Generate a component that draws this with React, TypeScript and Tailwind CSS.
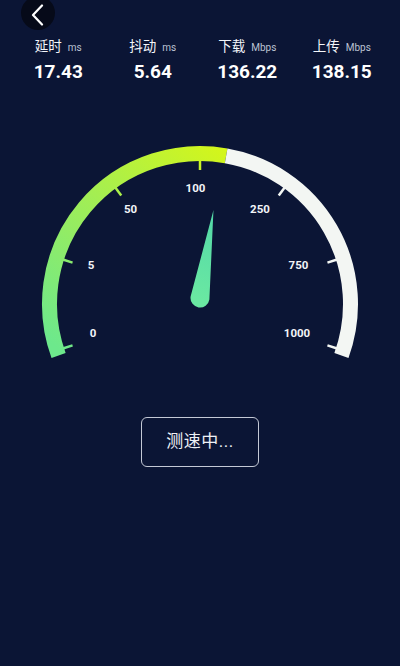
import React from 'react'

const CX = 200
const CY = 304

const polar = (deg: number, r: number) => {
  const a = (deg * Math.PI) / 180
  return [CX + r * Math.sin(a), CY - r * Math.cos(a)]
}

const arcPath = (a1: number, a2: number, r: number) => {
  const [x1, y1] = polar(a1, r)
  const [x2, y2] = polar(a2, r)
  const large = a2 - a1 > 180 ? 1 : 0
  return `M${x1} ${y1} A${r} ${r} 0 ${large} 1 ${x2} ${y2}`
}

const stats = [
  { label: '延时', unit: 'ms', value: '17.43' },
  { label: '抖动', unit: 'ms', value: '5.64' },
  { label: '下载', unit: 'Mbps', value: '136.22' },
  { label: '上传', unit: 'Mbps', value: '138.15' },
]

const labels = [
  { t: '0', x: 93, y: 333 },
  { t: '5', x: 91, y: 265 },
  { t: '50', x: 130.5, y: 209 },
  { t: '100', x: 195.5, y: 188 },
  { t: '250', x: 260, y: 209 },
  { t: '750', x: 298.5, y: 265 },
  { t: '1000', x: 297, y: 333 },
]

const ticks = [-108, -72, -36, 0, 36, 72, 108]

function Gauge() {
  return (
    <svg width="400" height="240" viewBox="0 130 400 240" className="block">
      <defs>
        <linearGradient id="fill" gradientUnits="userSpaceOnUse" x1="60" y1="350" x2="225" y2="150">
          <stop offset="0" stopColor="#6de88c" />
          <stop offset="0.55" stopColor="#a4ee52" />
          <stop offset="1" stopColor="#d4f61a" />
        </linearGradient>
        <linearGradient id="needle" gradientUnits="userSpaceOnUse" x1="200" y1="300" x2="214" y2="210">
          <stop offset="0" stopColor="#6ae8a2" />
          <stop offset="1" stopColor="#52d8a8" />
        </linearGradient>
      </defs>

      {/* arc */}
      <path d={arcPath(-110, 10, 150.5)} fill="none" stroke="url(#fill)" strokeWidth="15" />
      <path d={arcPath(10, 110, 150.5)} fill="none" stroke="#f3f6f3" strokeWidth="15" />

      {/* ticks */}
      {ticks.map((a) => {
        const [x1, y1] = polar(a, 134)
        const [x2, y2] = polar(a, 145)
        return (
          <line
            key={a}
            x1={x1}
            y1={y1}
            x2={x2}
            y2={y2}
            stroke={a <= 0 ? 'url(#fill)' : '#f3f6f3'}
            strokeWidth="2.5"
          />
        )
      })}

      {labels.map((l) => (
        <text
          key={l.t}
          x={l.x}
          y={l.y + 4}
          textAnchor="middle"
          fill="#f2f4f8"
          fontSize="11.5"
          fontWeight="700"
          fontFamily="Roboto, sans-serif"
        >
          {l.t}
        </text>
      ))}

      {/* needle */}
      <g transform="rotate(8.7 200 298)">
        <path d="M200 209 L209.5 298 A9.5 9.5 0 0 1 190.5 298 Z" fill="url(#needle)" />
      </g>
    </svg>
  )
}

export default function App() {
  return (
    <div
      className="w-[400px] h-[666px] bg-[#0b1535] overflow-hidden flex flex-col text-white"
      style={{ fontFamily: 'Roboto, "Noto Sans CJK SC", sans-serif' }}
    >
      <div className="h-[130px] flex flex-col">
        <div className="h-[30px]">
          <div className="ml-[21px] -mt-[4px] w-[34px] h-[34px] rounded-full bg-[#060a19] flex items-center justify-center">
            <svg width="14" height="22" viewBox="0 0 14 22" className="mt-[3px]">
              <polyline points="11,1.5 2,11 11,20.5" fill="none" stroke="#fff" strokeWidth="2.2" strokeLinecap="round" strokeLinejoin="round" />
            </svg>
          </div>
        </div>

        <div className="grid grid-cols-4 px-[11px] mt-[7px]">
          {stats.map((s) => (
            <div key={s.label} className="flex flex-col items-center">
              <div className="flex items-baseline gap-[6px] leading-[19px]">
                <span className="text-[13.5px] text-[#f4f6fa]">{s.label}</span>
                <span className="text-[10px] text-[#bcc3d3]">{s.unit}</span>
              </div>
              <div className="mt-[3px] text-[19px] leading-[24px] font-bold text-white">{s.value}</div>
            </div>
          ))}
        </div>
      </div>

      <Gauge />

      <div className="mt-[47px] mx-auto w-[118px] h-[50px] rounded-md border border-[#c4c9d6] flex items-center justify-center">
        <span className="text-[17px] text-[#eef0f5] tracking-[0.5px]">测速中...</span>
      </div>
    </div>
  )
}
